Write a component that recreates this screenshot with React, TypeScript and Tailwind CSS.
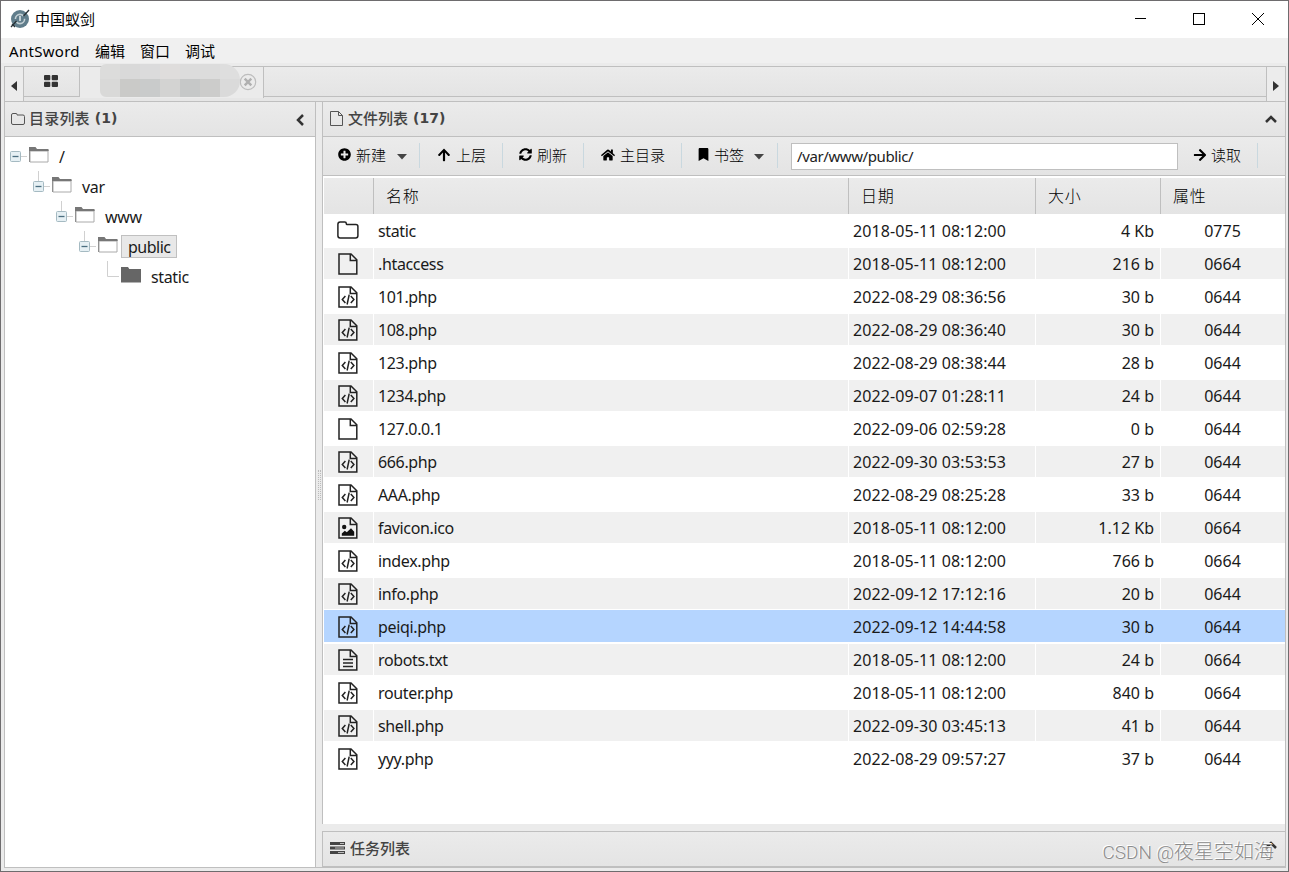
import React from "react";
import { FaPlusCircle, FaArrowUp, FaArrowRight, FaHome, FaBookmark, FaSyncAlt } from "react-icons/fa";

type Kind = "dir" | "file" | "code" | "image" | "text";

const files: [Kind, string, string, string, string][] = [
  ["dir", "static", "2018-05-11 08:12:00", "4 Kb", "0775"],
  ["file", ".htaccess", "2018-05-11 08:12:00", "216 b", "0664"],
  ["code", "101.php", "2022-08-29 08:36:56", "30 b", "0644"],
  ["code", "108.php", "2022-08-29 08:36:40", "30 b", "0644"],
  ["code", "123.php", "2022-08-29 08:38:44", "28 b", "0644"],
  ["code", "1234.php", "2022-09-07 01:28:11", "24 b", "0644"],
  ["file", "127.0.0.1", "2022-09-06 02:59:28", "0 b", "0644"],
  ["code", "666.php", "2022-09-30 03:53:53", "27 b", "0644"],
  ["code", "AAA.php", "2022-08-29 08:25:28", "33 b", "0644"],
  ["image", "favicon.ico", "2018-05-11 08:12:00", "1.12 Kb", "0664"],
  ["code", "index.php", "2018-05-11 08:12:00", "766 b", "0664"],
  ["code", "info.php", "2022-09-12 17:12:16", "20 b", "0644"],
  ["code", "peiqi.php", "2022-09-12 14:44:58", "30 b", "0644"],
  ["text", "robots.txt", "2018-05-11 08:12:00", "24 b", "0664"],
  ["code", "router.php", "2018-05-11 08:12:00", "840 b", "0664"],
  ["code", "shell.php", "2022-09-30 03:45:13", "41 b", "0644"],
  ["code", "yyy.php", "2022-08-29 09:57:27", "37 b", "0644"],
];

const columns = "grid grid-cols-[50px_475px_187px_125px_124px]";
const panelBar = "bg-gradient-to-b from-[#ebebeb] to-[#e4e4e4]";

function FileIcon({ kind }: { kind: Kind }) {
  if (kind === "dir")
    return (
      <svg width="22" height="18" viewBox="0 0 22 18" fill="none" stroke="#222" strokeWidth="1.5" className="-ml-px -mt-px">
        <path d="M.9 3.2Q.9.9 3.1.9h4.7q1.5 0 1.5 1.5v.4q0 .8.9.8h8.7q2 0 2 2v9.2q0 2.2-2.2 2.2H3.1Q.9 17 .9 14.8z" />
      </svg>
    );
  return (
    <svg width="20" height="22" viewBox="0 0 20 22" fill="none" stroke="#222" strokeWidth="1.5">
      <path d="M1 1h12l5.8 5.8V21H1zM12.3 1v6.4h6.5" />
      {kind === "code" && <path d="M7.4 10 4.3 13.5 7.4 17M12.8 10l3.1 3.5-3.1 3.5M11.2 8.7 9.1 18.5" strokeWidth="1.5" />}
      {kind === "text" && <path d="M5 10.5h10M5 14h10M5 17.5h10" strokeWidth="1.4" />}
      {kind === "image" && (
        <g fill="#111" stroke="none">
          <circle cx="6.2" cy="10" r="2.2" />
          <path d="M3.8 18.7v-2.2l3-2.8 2 1.5 4.2-4 3.2 3.6v3.9z" />
        </g>
      )}
    </svg>
  );
}

function OpenFolder() {
  return (
    <svg width="21" height="17" viewBox="0 0 21 17" fill="none">
      <path d="M0 0h6.500l1.500 2h11.500v2H2v11H0z" fill="#777" />
      <path d="M1 15V4h18v11z" fill="#fff" stroke="#aaa" />
      <path d="M.5 3.500h19" stroke="#777" />
    </svg>
  );
}

function ClosedFolder() {
  return (
    <svg width="21" height="17" viewBox="0 0 21 17" fill="#666">
      <path d="M0 0h7l1.3 2H20v13.500H0z" />
    </svg>
  );
}

const tree = [
  { name: "/", pad: "pl-[5px]" },
  { name: "var", pad: "pl-[28px]" },
  { name: "www", pad: "pl-[51px]" },
  { name: "public", pad: "pl-[74px]" },
  { name: "static", pad: "pl-[97px]" },
];

function TreeRow({ index }: { index: number }) {
  const { name, pad } = tree[index];
  const leaf = index === 4;
  return (
    <div className={`flex h-[30px] ${pad}`}>
      <svg width="19" height="30" viewBox="0 0 19 30" fill="none" className="shrink-0">
        {leaf ? (
          <path d="M5.5 0v15.500H17" stroke="#d0d0d0" />
        ) : (
          <>
            {index > 0 && <path d="M5.5 0v10" stroke="#d0d0d0" />}
            <path d="M11 15.500h6" stroke="#d0d0d0" />
            <rect x=".5" y="10.5" width="10" height="10" rx="1" fill="#e6f0f4" stroke="#a5bac2" />
            <path d="M2.5 15.500h6" stroke="#4b6e80" strokeWidth="1.3" />
          </>
        )}
      </svg>
      <div className="mt-[6px] h-[17px] w-[21px] shrink-0">{leaf ? <ClosedFolder /> : <OpenFolder />}</div>
      <div
        className={
          index === 3
            ? "ml-[2px] mt-[4px] h-[23px] border border-[#c0c0c0] bg-[#e8e8e8] pl-[6px] pr-[5px] leading-[23px] tracking-[-0.5px]"
            : "ml-[9px] mt-[5px] leading-[23px] tracking-[-0.35px]"
        }
      >
        {name}
      </div>
    </div>
  );
}

function Caret() {
  return (
    <svg width="10" height="6" viewBox="0 0 10 6" className="mt-[2px] shrink-0">
      <path d="M0 0h10L5 5.5z" fill="#444" />
    </svg>
  );
}

function Tool({ icon, label, width, gap, caret }: { icon: React.ReactNode; label: string; width: string; gap: string; caret?: string }) {
  return (
    <div className={`flex h-[25px] shrink-0 items-center border-r border-[#c9d8df] ${width}`}>
      {icon}
      <span className={`mb-[3px] whitespace-nowrap font-['Noto_Sans_CJK_SC',sans-serif] text-[15px] leading-[25px] font-light ${gap}`}>{label}</span>
      {caret && <span className={caret}><Caret /></span>}
    </div>
  );
}

export default function App() {
  return (
    <div className="flex h-[872px] w-[1289px] flex-col overflow-hidden border border-[#6e6c6e] bg-[#ebebeb] font-['Noto_Sans','Noto_Sans_CJK_SC',sans-serif] text-[16px] text-[#1a1a1a]">
      <header className="flex h-[37px] shrink-0 items-center bg-white pb-[2px] pl-[9px] text-black">
        <svg width="20" height="20" viewBox="0 0 20 20" fill="none">
          <circle cx="10" cy="10" r="9" fill="#607d8b" />
          <circle cx="10" cy="10" r="4.6" stroke="#c4d0d5" strokeWidth="1.6" strokeDasharray="11 3" />
          <path d="M10 7v5" stroke="#dce4e7" strokeWidth="1.6" />
          <path d="M1 18 6.5 12M13.5 7 19 1M2 15l3 3" stroke="#293237" strokeWidth="1.3" />
        </svg>
        <span className="ml-[5px] text-[15px] leading-5">中国蚁剑</span>
        <div className="ml-auto mr-[24px] flex items-center gap-[46px]">
          <svg width="12" height="12" fill="none" stroke="#000"><path d="M-1 5.5h12" /></svg>
          <svg width="13" height="12" fill="none" stroke="#000"><rect x=".5" y=".5" width="11" height="11" /></svg>
          <svg width="12" height="12" fill="none" stroke="#000"><path d="m0 0 12 12M12 0 0 12" /></svg>
        </div>
      </header>

      <nav className="flex h-[25px] shrink-0 items-center bg-[#f0f0f0] pl-2 pt-[2px] text-[15px] text-black">
        <span className="w-[86px] tracking-[0.3px]">AntSword</span>
        <span className="w-[45px]">编辑</span>
        <span className="w-[45px]">窗口</span>
        <span>调试</span>
      </nav>

      <div className="ml-[3px] mr-[2px] mt-[3px] flex h-[36px] shrink-0 border border-[#bfbfbf] bg-[#e6e6e6]">
        <div className="flex w-[19px] items-center justify-center border-r border-[#bfbfbf] bg-[#ececec]">
          <svg width="6" height="10" className="mt-[3px]"><path d="M6 0v10L0 5z" fill="#333" /></svg>
        </div>
        <div className={`flex h-[30px] w-[56px] items-center justify-center border-b border-r border-[#bfbfbf] ${panelBar}`}>
          <svg width="14" height="12" fill="#333" className="-ml-[2px] -mt-px">
            <rect width="6.3" height="5.3" rx="1" /><rect x="7.7" width="6.3" height="5.3" rx="1" />
            <rect y="6.7" width="6.3" height="5.3" rx="1" /><rect x="7.7" y="6.7" width="6.3" height="5.3" rx="1" />
          </svg>
        </div>
        <div className="relative flex h-[31px] w-[184px] items-center border-r border-[#bfbfbf] bg-[#ebebeb] pl-[20px]">
          <div className="absolute left-[20px] top-[-3px] grid h-[33px] w-[140px] grid-cols-7 grid-rows-[15px_18px] overflow-hidden rounded-l-[6px] rounded-r-[16px]">
            <i className="bg-[#dcdcdb]" /><i className="bg-[#d9d9d9]" /><i className="bg-[#dbdbdc]" /><i className="bg-[#dfdddc]" /><i className="bg-[#dcdcdc]" /><i className="bg-[#dcdcdc]" /><i className="bg-[#dedede]" />
            <i className="bg-[#d9d9d8]" /><i className="bg-[#cacac8]" /><i className="bg-[#c9cbcb]" /><i className="bg-[#d3d3d2]" /><i className="bg-[#c6c8c8]" /><i className="bg-[#cccccb]" /><i className="bg-[#dadada]" />
          </div>
          <svg width="18" height="18" viewBox="0 0 18 18" fill="none" className="-mt-px ml-[139px]">
            <circle cx="9" cy="9" r="7.7" stroke="#bdbdbd" strokeWidth="1.2" />
            <path d="m5.7 5.7 6.6 6.6M12.3 5.7l-6.6 6.6" stroke="#b0b0b0" strokeWidth="2.4" />
          </svg>
        </div>
        <div className={`h-[30px] flex-1 border-b border-[#bfbfbf] ${panelBar}`} />
        <div className="flex w-[19px] items-center justify-center border-l border-[#bfbfbf] bg-[#ececec]">
          <svg width="6" height="10" className="mt-[3px]"><path d="M0 0v10l6-5z" fill="#333" /></svg>
        </div>
      </div>

      <main className="ml-[3px] mr-[2px] -mt-px flex h-[767px] shrink-0 border border-[#bfbfbf]">
        <aside className="flex w-[311px] shrink-0 flex-col border-r border-[#bfbfbf] bg-white">
          <div className={`flex h-[35px] shrink-0 items-center border-b border-[#bfbfbf] pl-[6px] pr-[11px] text-[15px] font-bold text-[#444] ${panelBar}`}>
            <svg width="14" height="12" fill="none" stroke="#555" className="-mt-px"><path d="M.5 2Q.5.5 2 .5h3q1 0 1 1v.5h6q1.5 0 1.5 1.5V10q0 1.5-1.5 1.5H2Q.5 11.5.5 10z" /></svg>
            <span className="mb-[2px] ml-[4px] leading-6 tracking-[0.2px] font-medium">目录列表</span>
            <span className="mb-[2px] ml-[5px] font-['DejaVu_Sans',sans-serif] text-[14px]">(1)</span>
            <svg width="8" height="12" fill="none" stroke="#333" strokeWidth="2.5" className="ml-auto mt-px"><path d="M7 1 2 6l5 5" /></svg>
          </div>
          <div className="pt-[4px]">
            {tree.map((t, i) => <TreeRow key={t.name} index={i} />)}
          </div>
        </aside>
        <div className="flex w-[6px] shrink-0 items-center justify-center">
          <div className="h-[30px] w-[3px] border-x border-dotted border-[#bbb]" />
        </div>

        <section className="flex min-w-0 flex-1 flex-col">
          <div className="flex h-[722px] shrink-0 flex-col border-l border-[#bfbfbf] bg-white">
            <div className={`flex h-[35px] shrink-0 items-center border-b border-[#bfbfbf] pl-[7px] pr-[8px] text-[15px] font-bold text-[#444] ${panelBar}`}>
              <svg width="13" height="15" fill="none" stroke="#555" className="-mt-px"><path d="M.5.5h8l4 4v10H.5zM8.5.5v4h4" /></svg>
              <span className="mb-[2px] ml-[5px] leading-6 font-medium">文件列表</span>
              <span className="mb-[2px] ml-[5px] font-['DejaVu_Sans',sans-serif] text-[14px]">(17)</span>
              <svg width="12" height="8" fill="none" stroke="#333" strokeWidth="2.5" className="ml-auto"><path d="m1 7 5-5 5 5" /></svg>
            </div>
            <div className={`flex h-[39px] shrink-0 border-b border-[#bfbfbf] pt-[6px] text-black ${panelBar}`}>
              <Tool icon={<FaPlusCircle size={13} className="-mt-[2px] ml-[15px]" />} label="新建" width="w-[97px]" gap="ml-[5px]" caret="ml-[11px]" />
              <Tool icon={<FaArrowUp size={14} className="-mt-[2px] ml-[17px]" />} label="上层" width="w-[83px]" gap="ml-[5px]" />
              <Tool icon={<FaSyncAlt size={13} className="-mt-[2px] ml-[16px]" />} label="刷新" width="w-[81px]" gap="ml-[5px]" />
              <Tool icon={<FaHome size={14} className="-mt-[2px] ml-[17px]" />} label="主目录" width="w-[98px]" gap="ml-[5px]" />
              <Tool icon={<FaBookmark size={13} className="-mt-[2px] ml-[15px]" />} label="书签" width="w-[96px]" gap="ml-[4px]" caret="ml-[10px]" />
              <div className="ml-[13px] h-[27px] w-[387px] shrink-0 border border-[#bfbfbf] bg-white pl-[5px] text-[15px] leading-[25px] tracking-[-0.4px] text-[#222]">/var/www/public/</div>
              <Tool icon={<FaArrowRight size={14} className="-mt-[2px] ml-[15px]" />} label="读取" width="w-[80px]" gap="ml-[4px]" />
            </div>
            <div className="ml-px mt-[2px]">
              <div className={`${columns} h-[36px] font-['Noto_Sans_CJK_SC',sans-serif] text-[16px] font-light leading-[35px] tracking-[0.8px] text-black`}>
                {["", "名称", "日期", "大小", "属性"].map((c, i) => (
                  <div key={i} className={`${panelBar} pl-[12px] ${i < 4 ? "border-r border-[#bfbfbf]" : ""}`}>{c}</div>
                ))}
              </div>
              {files.map(([kind, name, date, size, mode], i) => {
                const line = i === 12 ? "border-[#b5d5ff]" : "border-white";
                return (
                  <div
                    key={name}
                    className={`${columns} h-[33px] border-b border-white ${i === 12 ? "bg-[#b5d5ff]" : i % 2 ? "border-t bg-[#f0f0f0]" : "bg-white"} ${i % 2 ? "leading-[32px]" : "leading-[34px]"}`}
                  >
                    <div className={`flex items-center border-r pl-[14px] ${line} ${i % 2 ? "" : "pt-px"}`}><FileIcon kind={kind} /></div>
                    <div className={`h-[31px] border-r pl-[4px] tracking-[-0.35px] ${line}`}>{name}</div>
                    <div className={`h-[31px] border-r pl-[4px] tracking-[0.1px] ${line}`}>{date}</div>
                    <div className={`h-[31px] border-r pr-[6px] text-right ${line}`}>{size}</div>
                    <div className="h-[31px] pr-px text-center">{mode}</div>
                  </div>
                );
              })}
            </div>
          </div>
          <div className={`relative mt-[7px] flex h-[36px] items-center border border-r-0 border-[#bfbfbf] pl-[7px] ${panelBar}`}>
            <svg width="15" height="12" fill="#444" className="-mt-[2px]"><path d="M0 0h15v3H0zM0 4.5h15v3H0zM0 9h15v3H0z" /><path d="M10 1h4v1h-4zM5 5.5h9v1H5zM8 10h6v1H8z" fill="#bbb" /></svg>
            <span className="mb-[2px] ml-[5px] text-[15px] font-medium leading-6 text-[#444]">任务列表</span>
            <svg width="12" height="8" fill="none" stroke="#333" strokeWidth="2.5" className="-mt-[8px] ml-auto mr-[8px]"><path d="m1 7 5-5 5 5" /></svg>
            <span className="absolute right-[11px] top-[6px] whitespace-nowrap font-['Roboto','Noto_Sans_CJK_SC',sans-serif] text-[20px] font-light leading-[28px] text-[#8c8c8c] [text-shadow:-1px_-1px_0_#fff]"><span className="text-[19px]">CSDN @</span>夜星空如海</span>
          </div>
        </section>
      </main>
    </div>
  );
}
